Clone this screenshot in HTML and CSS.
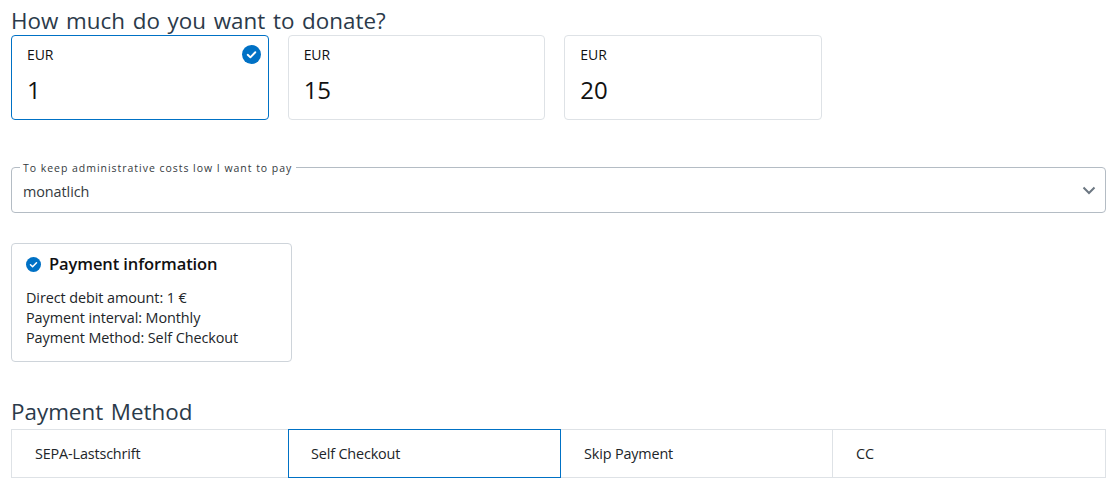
FILE: index.html
```html
<!DOCTYPE html>
<html lang="en">
<head>
    <meta charset="UTF-8">
    <title>Donate</title>
    <link rel="stylesheet" href="styles.css">
</head>
<body>

    <h2 class="title">How much do you want to donate?</h2>
    <div class="amounts">
        <div class="amount active">
            <span class="currency">EUR</span>
            <span class="value">1</span>
            <svg class="check check-lg" viewBox="0 0 20 20"><circle cx="10" cy="10" r="10"/><path d="M6 10.3l2.8 2.7L14 7.6"/></svg>
        </div>
        <div class="amount">
            <span class="currency">EUR</span>
            <span class="value">15</span>
        </div>
        <div class="amount">
            <span class="currency">EUR</span>
            <span class="value">20</span>
        </div>
    </div>

    <fieldset class="select-box">
        <legend>To keep administrative costs low I want to pay</legend>
        <span>monatlich</span>
        <svg class="chevron" viewBox="0 0 14 9"><path d="M1.5 1.5L7 7l5.5-5.5"/></svg>
    </fieldset>

    <div class="info">
        <div class="info-head">
            <svg class="check" viewBox="0 0 20 20"><circle cx="10" cy="10" r="10"/><path d="M6 10.3l2.8 2.7L14 7.6"/></svg>
            <h3>Payment information</h3>
        </div>
        <p>Direct debit amount: 1 €</p>
        <p>Payment interval: Monthly</p>
        <p>Payment Method: Self Checkout</p>
    </div>

    <h2 class="title method-title">Payment Method</h2>
    <div class="tabs">
        <div class="tab">SEPA-Lastschrift</div>
        <div class="tab active">Self Checkout</div>
        <div class="tab">Skip Payment</div>
        <div class="tab">CC</div>
    </div>

</body>
</html>
```

FILE: styles.css
```css
* {
    margin: 0;
    padding: 0;
    box-sizing: border-box;
    font-family: "Open Sans", "Noto Sans", sans-serif;
}

body {
    background-color: #fff;
    color: #212529;
    width: 1118px;
    padding: 7px 12px 0 11px;
    font-size: 14.4px;
    letter-spacing: -0.07px;
}

.title {
    font-size: 22.4px;
    font-weight: 400;
    line-height: 28px;
    letter-spacing: 0;
    word-spacing: 1.9px;
    color: #2b3a4a;
}

.amounts {
    display: flex;
    gap: 19px;
}

.amount {
    position: relative;
    width: 257.67px;
    height: 85px;
    padding: 9px 15px;
    border: 1px solid #dee2e6;
    border-radius: 4px;
    color: #111;
}

.amount.active {
    border-color: #0071c5;
}

.currency {
    display: block;
    font-size: 14px;
    line-height: 20px;
}

.value {
    display: block;
    margin-top: 8px;
    font-size: 24px;
    line-height: 34px;
}

.check {
    flex: none;
    width: 15px;
    height: 15px;
}

.check circle {
    fill: #0071c5;
}

.check path {
    fill: none;
    stroke: #fff;
    stroke-width: 2;
    stroke-linecap: round;
    stroke-linejoin: round;
}

.check-lg {
    position: absolute;
    top: 9px;
    right: 7px;
    width: 19px;
    height: 19px;
}

.select-box {
    position: relative;
    height: 53px;
    margin-top: 40px;
    padding: 0 11px;
    border: 1px solid #b4bcc4;
    border-radius: 4px;
    line-height: 36px;
    color: #343a40;
}

.select-box legend {
    padding: 2px 4px 0 3px;
    margin-left: -3px;
    font-size: 10.5px;
    line-height: 12px;
    letter-spacing: 0.97px;
    color: #343a40;
}

.chevron {
    position: absolute;
    top: 12px;
    right: 9px;
    width: 14px;
    height: 9px;
    fill: none;
    stroke: #6c7782;
    stroke-width: 2;
}

.info {
    width: 281px;
    height: 119px;
    margin-top: 30px;
    padding: 8px 14px;
    border: 1px solid #ced4da;
    border-radius: 4px;
    line-height: 20px;
    color: #212529;
}

.info-head {
    display: flex;
    align-items: center;
    gap: 8px;
    margin-bottom: 12px;
    height: 24px;
}

.info-head h3 {
    font-size: 16.5px;
    font-weight: 600;
    letter-spacing: -0.1px;
    color: #111;
}

.method-title {
    margin-top: 36px;
}

.tabs {
    display: grid;
    grid-template-columns: 276px 273px 271px 1fr;
    height: 49px;
    margin-top: 3px;
    border: 1px solid #dee2e6;
    letter-spacing: -0.15px;
}

.tab {
    padding-left: 23px;
    line-height: 47px;
    border-left: 1px solid #dee2e6;
    color: #212529;
}

.tab:first-child {
    border-left: none;
}

.tab.active {
    margin: -1px 0;
    height: 49px;
    padding-left: 22px;
    border: 1px solid #0071c5;
}

.tab.active + .tab {
    border-left: none;
}
```
